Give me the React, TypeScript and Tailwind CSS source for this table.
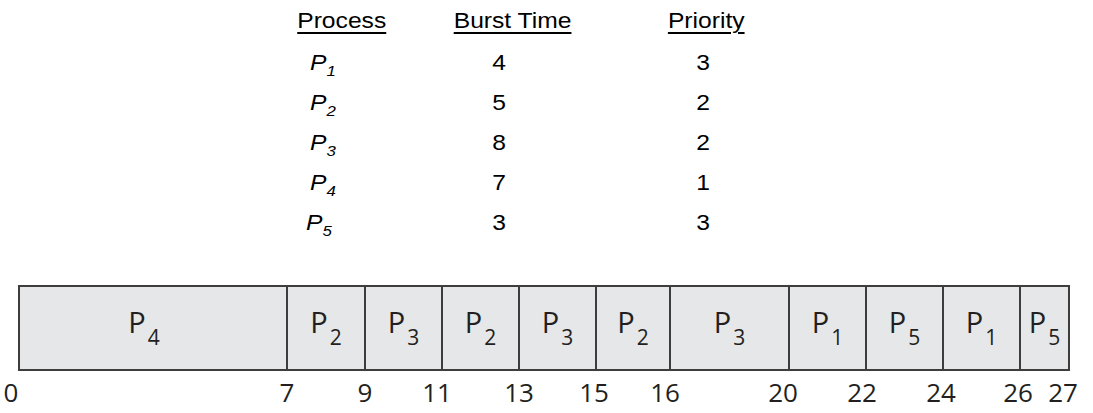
import React from "react";

const rows = [
  { p: "1", b: "4", pr: "3", pShift: "ml-0" },
  { p: "2", b: "5", pr: "2", pShift: "ml-0" },
  { p: "3", b: "8", pr: "2", pShift: "ml-0" },
  { p: "4", b: "7", pr: "1", pShift: "ml-0" },
  { p: "5", b: "3", pr: "3", pShift: "-ml-[4px]" },
];

const cells = [
  { n: "4", w: "w-[266px]", extra: "pr-[18px]" },
  { n: "2", w: "w-[78px] border-l-2", extra: "" },
  { n: "3", w: "w-[77px] border-l-2", extra: "" },
  { n: "2", w: "w-[77px] border-l-2", extra: "" },
  { n: "3", w: "w-[77px] border-l-2", extra: "" },
  { n: "2", w: "w-[74px] border-l-2", extra: "" },
  { n: "3", w: "w-[119px] border-l-2", extra: "" },
  { n: "1", w: "w-[77px] border-l-2", extra: "" },
  { n: "5", w: "w-[77px] border-l-2", extra: "" },
  { n: "1", w: "w-[77px] border-l-2", extra: "" },
  { n: "5", w: "w-[49px] border-l-2", extra: "" },
];

const ticks = [
  { t: "7", w: "w-[268px]", off: "mr-0" },
  { t: "9", w: "w-[78px]", off: "mr-0" },
  { t: "11", w: "w-[77px]", off: "mr-[5px]" },
  { t: "13", w: "w-[77px]", off: "mr-0" },
  { t: "15", w: "w-[77px]", off: "mr-[2px]" },
  { t: "16", w: "w-[74px]", off: "mr-[5px]" },
  { t: "20", w: "w-[119px]", off: "mr-[6px]" },
  { t: "22", w: "w-[77px]", off: "mr-[4px]" },
  { t: "24", w: "w-[77px]", off: "mr-[2px]" },
  { t: "26", w: "w-[77px]", off: "mr-[2px]" },
  { t: "27", w: "w-[49px]", off: "mr-[6px]" },
];

function Header({ children }: { children: React.ReactNode }) {
  return (
    <span className="inline-block scale-x-[1.12] origin-center whitespace-nowrap underline decoration-[1.5px] underline-offset-[4px]">
      {children}
    </span>
  );
}

function Val({ children }: { children: React.ReactNode }) {
  return <span className="inline-block scale-x-[1.12] origin-center whitespace-nowrap">{children}</span>;
}

export default function App() {
  return (
    <div className="w-[1093px] h-[413px] bg-white overflow-hidden text-black">
      <div className="font-['Liberation_Sans',Arial,sans-serif] text-[22px]">
        <div className="flex h-[43px] pt-[1px] leading-[40px]">
          <div className="ml-[342px] w-0 flex justify-center">
            <Header>Process</Header>
          </div>
          <div className="ml-[171px] w-0 flex justify-center">
            <Header>Burst Time</Header>
          </div>
          <div className="ml-[193px] w-0 flex justify-center">
            <Header>Priority</Header>
          </div>
        </div>
        {rows.map((r, i) => (
          <div key={i} className="flex h-[40px] leading-[40px]">
            <div className="ml-[310px] w-[99px]">
              <span className={`inline-block italic scale-x-[1.12] origin-left whitespace-nowrap ${r.pShift}`}>
                P<span className="relative top-[6px] text-[15px] leading-none">{r.p}</span>
              </span>
            </div>
            <div className="ml-[90px] w-0 flex justify-center">
              <Val>{r.b}</Val>
            </div>
            <div className="ml-[204px] w-0 flex justify-center">
              <Val>{r.pr}</Val>
            </div>
          </div>
        ))}
      </div>

      <div className="font-['Open_Sans','Noto_Sans',sans-serif] text-[#231f20]">
        <div className="mt-[42px] ml-[18px] w-[1052px] h-[86px] border-2 border-[#3d3d3d] bg-[#e6e7e8] flex">
          {cells.map((c, i) => (
            <div
              key={i}
              className={`${c.w} ${c.extra} h-full border-[#3d3d3d] flex justify-center items-baseline pt-[20px] leading-none`}
            >
              <span className="text-[29px]">P</span>
              <span className="text-[21px] relative top-[12px] ml-[2px]">{c.n}</span>
            </div>
          ))}
        </div>

        <div className="mt-[8px] ml-[19px] flex text-[26px] leading-none">
          <div className="w-0 flex justify-center -ml-[8px] mr-[8px]">
            <span>0</span>
          </div>
          {ticks.map((t, i) => (
            <div key={i} className={`${t.w} flex justify-end`}>
              <div className={`w-0 flex justify-center ${t.off}`}>
                <span>{t.t}</span>
              </div>
            </div>
          ))}
        </div>
      </div>
    </div>
  );
}
